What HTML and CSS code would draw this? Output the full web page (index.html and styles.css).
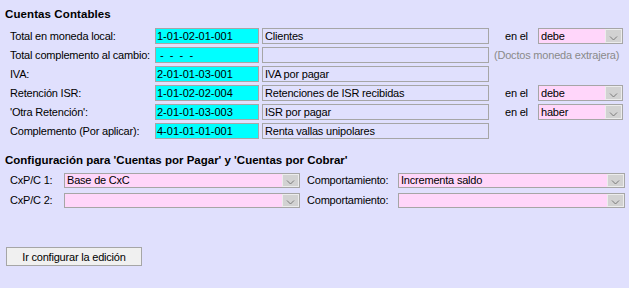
FILE: index.html
```html
<!DOCTYPE html>
<html lang="es">
<head>
    <meta charset="UTF-8">
    <title>Cuentas Contables</title>
    <link rel="stylesheet" href="styles.css">
</head>
<body>
    <div class="panel">
        <h2 class="title">Cuentas Contables</h2>
        <div class="accounts">
            <span class="label">Total en moneda local:</span>
            <span class="box code">1-01-02-01-001</span>
            <span class="box desc">Clientes</span>
            <span class="side">en el</span>
            <span class="combo small"><span class="value">debe</span><span class="drop"><svg width="9" height="5" viewBox="0 0 9 5"><path d="M1 0.5 L4.5 4 L8 0.5" fill="none" stroke="#7a7a7a" stroke-width="1"/></svg></span></span>

            <span class="label">Total complemento al cambio:</span>
            <span class="box code">&nbsp;- &nbsp;- &nbsp;- &nbsp;-</span>
            <span class="box desc"></span>
            <span class="note">(Doctos moneda extrajera)</span>

            <span class="label">IVA:</span>
            <span class="box code">2-01-01-03-001</span>
            <span class="box desc">IVA por pagar</span>
            <span class="blank"></span>

            <span class="label">Retención ISR:</span>
            <span class="box code">1-01-02-02-004</span>
            <span class="box desc">Retenciones de ISR recibidas</span>
            <span class="side">en el</span>
            <span class="combo small"><span class="value">debe</span><span class="drop"><svg width="9" height="5" viewBox="0 0 9 5"><path d="M1 0.5 L4.5 4 L8 0.5" fill="none" stroke="#7a7a7a" stroke-width="1"/></svg></span></span>

            <span class="label">'Otra Retención':</span>
            <span class="box code">2-01-01-03-003</span>
            <span class="box desc">ISR por pagar</span>
            <span class="side">en el</span>
            <span class="combo small"><span class="value">haber</span><span class="drop"><svg width="9" height="5" viewBox="0 0 9 5"><path d="M1 0.5 L4.5 4 L8 0.5" fill="none" stroke="#7a7a7a" stroke-width="1"/></svg></span></span>

            <span class="label">Complemento (Por aplicar):</span>
            <span class="box code">4-01-01-01-001</span>
            <span class="box desc">Renta vallas unipolares</span>
            <span class="blank"></span>
        </div>

        <h2 class="title second">Configuración para 'Cuentas por Pagar' y 'Cuentas por Cobrar'</h2>
        <div class="config">
            <span class="label">CxP/C 1:</span>
            <span class="combo wide"><span class="value">Base de CxC</span><span class="drop"><svg width="9" height="5" viewBox="0 0 9 5"><path d="M1 0.5 L4.5 4 L8 0.5" fill="none" stroke="#7a7a7a" stroke-width="1"/></svg></span></span>
            <span class="label behave">Comportamiento:</span>
            <span class="combo wide"><span class="value">Incrementa saldo</span><span class="drop"><svg width="9" height="5" viewBox="0 0 9 5"><path d="M1 0.5 L4.5 4 L8 0.5" fill="none" stroke="#7a7a7a" stroke-width="1"/></svg></span></span>

            <span class="label">CxP/C 2:</span>
            <span class="combo wide"><span class="value"></span><span class="drop"><svg width="9" height="5" viewBox="0 0 9 5"><path d="M1 0.5 L4.5 4 L8 0.5" fill="none" stroke="#7a7a7a" stroke-width="1"/></svg></span></span>
            <span class="label behave">Comportamiento:</span>
            <span class="combo wide"><span class="value"></span><span class="drop"><svg width="9" height="5" viewBox="0 0 9 5"><path d="M1 0.5 L4.5 4 L8 0.5" fill="none" stroke="#7a7a7a" stroke-width="1"/></svg></span></span>
        </div>

        <button class="edit-btn">Ir configurar la edición</button>
    </div>
</body>
</html>
```
FILE: styles.css
```css
* {
    margin: 0;
    padding: 0;
    box-sizing: border-box;
}

body {
    font-family: "Liberation Sans", Arial, sans-serif;
    font-size: 11px;
    letter-spacing: -0.2px;
    background: #e0e0fd;
    color: #000;
    width: 629px;
    height: 288px;
    overflow: hidden;
}

.panel {
    padding: 8px 0 0 5px;
}

.title {
    font-size: 11.5px;
    font-weight: bold;
    letter-spacing: 0.1px;
    line-height: 13px;
    height: 14px;
    margin-bottom: 6px;
}

.title.second {
    margin-top: 15px;
    margin-bottom: 5px;
    letter-spacing: 0;
}

.accounts {
    display: grid;
    grid-template-columns: 142px 104px 227px 43px 85px;
    grid-auto-rows: 16px;
    column-gap: 3px;
    row-gap: 3px;
    padding-left: 5px;
    align-items: center;
}

.label {
    white-space: nowrap;
    line-height: 16px;
}

.box {
    height: 16px;
    border: 1px solid #a6a6a6;
    line-height: 14px;
    padding-left: 1px;
    white-space: nowrap;
    overflow: hidden;
}

.code {
    background: #00ffff;
    letter-spacing: 0;
}

.desc {
    background: #e0e0fd;
    padding-left: 2px;
}

.side {
    padding-left: 13px;
    line-height: 16px;
}

.note {
    grid-column: span 2;
    color: #8a8a8a;
    padding-left: 2px;
    white-space: nowrap;
    line-height: 16px;
}

.blank {
    grid-column: span 2;
}

.combo {
    display: flex;
    height: 16px;
    border: 1px solid #a6a6a6;
    background: #ffd6fa;
}

.combo .value {
    flex: 1;
    line-height: 14px;
    padding-left: 2px;
    white-space: nowrap;
    overflow: hidden;
}

.drop {
    width: 17px;
    background: #d2d2d2;
    border: 1px solid #ececec;
    display: flex;
    align-items: flex-end;
    justify-content: center;
    padding-bottom: 1px;
}

.config {
    display: grid;
    grid-template-columns: 54px 236px 98px 227px;
    grid-auto-rows: 15px;
    column-gap: 0;
    row-gap: 5px;
    padding-left: 5px;
    align-items: center;
}

.config .label {
    line-height: 15px;
}

.config .combo {
    height: 15px;
}

.config .combo .value {
    line-height: 13px;
}

.label.behave {
    padding-left: 7px;
}

.edit-btn {
    display: block;
    margin: 39px 0 0 1px;
    width: 136px;
    height: 19px;
    background: #f0f0f0;
    border: 1px solid #a6a6a6;
    font-family: inherit;
    font-size: 11px;
    letter-spacing: -0.2px;
    color: #000;
}
```
